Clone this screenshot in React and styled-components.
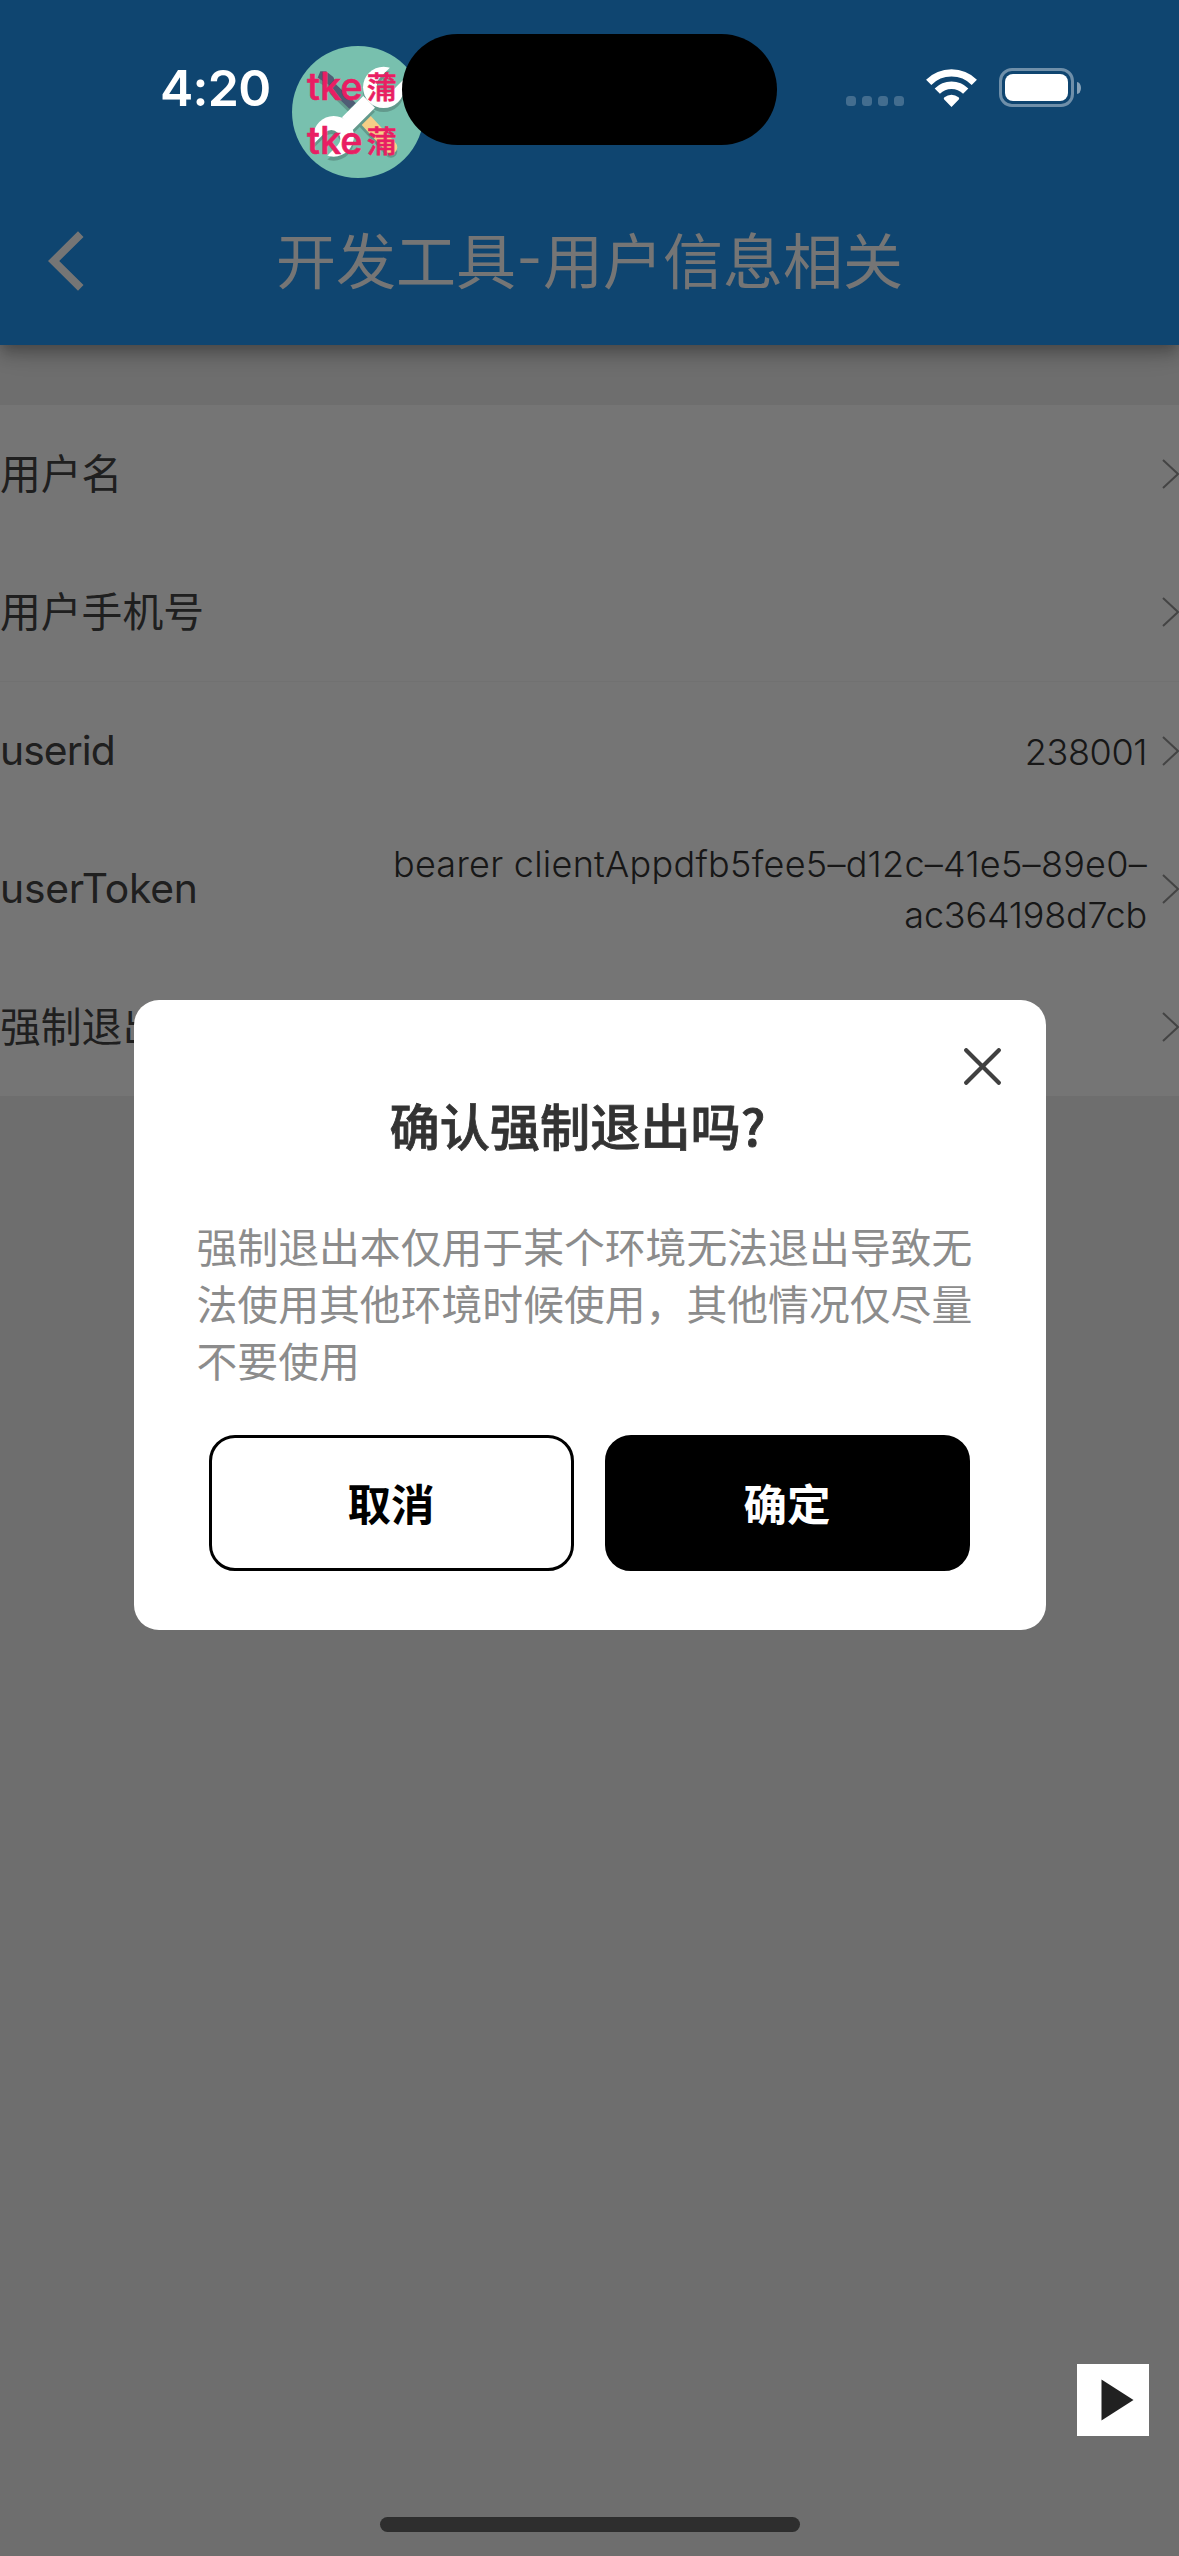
import React from "react";
import styled, { createGlobalStyle } from "styled-components";

const CJK = '"Noto Sans CJK SC", sans-serif';
const LATIN = `Inter, ${CJK}`;

const GlobalStyle = createGlobalStyle`
  * { box-sizing: border-box; }
  body { margin: 0; background: #efefef; font-family: ${CJK}; }
`;

const Screen = styled.div`
  display: grid;
  grid-template: 2556px / 1179px;
  overflow: hidden;
  background: #efefef;
  > * { grid-area: 1 / 1; }
`;

const Page = styled.div`
  display: flex;
  flex-direction: column;
`;

const AppBar = styled.header`
  flex: none;
  display: grid;
  grid-template-columns: 132px 1fr 132px;
  align-items: center;
  height: 345px;
  padding-top: 177px;
  background: #2196f3;
  box-shadow: 0 6px 12px -3px rgba(0, 0, 0, 0.2), 0 12px 15px rgba(0, 0, 0, 0.14),
    0 3px 30px rgba(0, 0, 0, 0.12);
`;

const BackButton = styled.button`
  display: flex;
  padding: 0 0 0 48px;
  border: 0;
  background: none;
`;

const Title = styled.h1`
  display: flex;
  justify-content: center;
  margin: 0;
  padding-bottom: 6px;
  font: 400 60px/84px ${CJK};
  color: #fff;
`;

const TitleDash = styled.span`
  width: 27px;
  text-align: center;
  font-family: Inter, sans-serif;
  font-size: 56px;
`;

const List = styled.main`
  display: flex;
  flex-direction: column;
  margin-top: 60px;
  background: #fff;
`;

const Row = styled.div`
  display: flex;
  align-items: center;
  height: ${(p) => (p.$divided ? 139 : 138)}px;
  ${(p) => p.$divided && "border-top: 1px solid #f6f6f6;"}
`;

const Label = styled.span`
  flex: none;
  padding-bottom: ${(p) => (p.$tracking ? 2 : 0)}px;
  font: 400 40.8px/56px ${LATIN};
  letter-spacing: ${(p) => p.$tracking || 0}px;
  color: #444;
`;

const Value = styled.span`
  flex: 1;
  padding: 2px 15px 0 160px;
  text-align: right;
  font: 300 36px/51px ${LATIN};
  color: #333;
`;

const Line = styled.span`
  display: block;
  white-space: nowrap;
  letter-spacing: ${(p) => p.$tracking || 0}px;
`;

const Backdrop = styled.div`
  z-index: 1;
  display: flex;
  align-items: flex-start;
  justify-content: center;
  padding-top: 1000px;
  background: rgba(0, 0, 0, 0.54);
`;

const Dialog = styled.section`
  display: flex;
  flex-direction: column;
  width: 912px;
  height: 630px;
  border-radius: 25px;
  background: #fff;
`;

const CloseButton = styled.button`
  align-self: flex-end;
  display: flex;
  margin: 48px 45px 0 0;
  padding: 0;
  border: 0;
  background: none;
`;

const DialogTitle = styled.h2`
  margin: 4px 24px 0 0;
  text-align: center;
  font: 500 50.2px/70px ${CJK};
  -webkit-text-stroke: 0.8px #333;
  color: #333;
`;

const Message = styled.p`
  margin: 58px 72px 0 63px;
  font: 400 40.85px/57px ${CJK};
  color: #8c8c8c;
`;

const Actions = styled.div`
  display: flex;
  gap: 31px;
  margin: 47px 76px 0 75px;
`;

const ActionButton = styled.button`
  flex: 1;
  height: 136px;
  padding: 0;
  border: 3px solid #000;
  border-radius: 26px;
  background: ${(p) => (p.$primary ? "#000" : "#fff")};
  color: ${(p) => (p.$primary ? "#fff" : "#000")};
  font: 700 43.5px/60px ${CJK};
`;

const SystemLayer = styled.div`
  z-index: 2;
  position: relative;
  display: flex;
  flex-direction: column;
  pointer-events: none;
`;

const StatusBar = styled.div`
  display: grid;
  grid-template-columns: 402px 375px 1fr;
  align-items: center;
  height: 177px;
`;

const Clock = styled.time`
  padding: 0 0 2px 160px;
  font: 600 50px/60px ${LATIN};
  letter-spacing: -0.7px;
  color: #fff;
`;

const Island = styled.div`
  z-index: 1;
  height: 111px;
  margin-top: 1px;
  border-radius: 56px;
  background: #000;
`;

const Indicators = styled.div`
  display: flex;
  align-items: flex-end;
  padding: 0 0 2px 69px;
`;

const Signal = styled.div`
  display: flex;
  gap: 6px;
  padding-bottom: 1px;
  margin-right: 22px;
`;

const SignalDot = styled.i`
  width: 10px;
  height: 10px;
  border-radius: 3.5px;
  background: rgba(255, 255, 255, 0.22);
`;

const Battery = styled.div`
  width: 75px;
  height: 39px;
  margin-left: 22px;
  padding: 3px;
  border: 3px solid rgba(255, 255, 255, 0.4);
  border-radius: 13px;
`;

const BatteryFill = styled.div`
  height: 100%;
  border-radius: 8px;
  background: #fff;
`;

const BatteryCap = styled.div`
  align-self: center;
  width: 4px;
  height: 12px;
  margin-left: 3px;
  border-radius: 0 4px 4px 0 / 0 6px 6px 0;
  background: rgba(255, 255, 255, 0.5);
`;

const DebugBadge = styled.div`
  position: absolute;
  left: 292px;
  top: 46px;
  display: grid;
  width: 132px;
  height: 132px;
  border-radius: 50%;
  overflow: hidden;
  > * { grid-area: 1 / 1; }
`;

const BadgeText = styled.div`
  z-index: 1;
  padding: 13px 0 0 15px;
  font: 500 38px/54px ${LATIN};
  -webkit-text-stroke: 0.6px #e91e63;
  color: #e91e63;
`;

const BadgeLine = styled.div`
  display: flex;
  align-items: center;
  height: 54px;
  gap: 4px;
`;

const BadgeGlyph = styled.span`
  font: 500 30px/54px ${CJK};
  padding-bottom: 2px;
`;

const FloatingPlay = styled.button`
  display: flex;
  align-self: flex-end;
  width: 72px;
  height: 72px;
  margin: auto 30px 0 0;
  padding: 15px 0 0 24px;
  border: 0;
  background: #fff;
`;

const HomeIndicator = styled.div`
  align-self: center;
  width: 420px;
  height: 15px;
  margin: 81px 0 24px;
  border-radius: 8px;
  background: #2e2e2e;
`;

const BackIcon = () => (
  <svg width="36" height="60" viewBox="0 0 36 60">
    <path d="M30 0.3 35.5 6 11.2 30 35.5 54 30 59.7 0 30Z" fill="#fff" />
  </svg>
);

const RowArrow = () => (
  <svg width="17" height="30" viewBox="0 0 17 30">
    <path d="M1 1 16 15 1 29" fill="none" stroke="#949494" strokeWidth="2" />
  </svg>
);

const CloseIcon = () => (
  <svg width="37" height="37" viewBox="0 0 37 37">
    <path d="M2.2 2.2 34.8 34.8M34.8 2.2 2.2 34.8" stroke="#404040" strokeWidth="4.2" strokeLinecap="round" />
  </svg>
);

const WifiIcon = () => (
  <svg width="51" height="38" viewBox="0 0 51 38">
    <g fill="none" stroke="#fff" strokeWidth="7.4">
      <path d="M2.7 13.3a32.2 32.2 0 0 1 45.6 0" />
      <path d="M11.3 22.2a20 20 0 0 1 28.4 0" />
    </g>
    <path d="M25.5 38 18.2 30.4c-.6-.8-.5-1.6.3-2.2a11 11 0 0 1 14 0c.8.6.9 1.4.3 2.2Z" fill="#fff" />
  </svg>
);

const PlayIcon = () => (
  <svg width="33" height="42" viewBox="0 0 33 42">
    <path d="M0.5 0.5 32.5 21 0.5 41.5Z" fill="#212121" />
  </svg>
);

const ToolsIcon = () => (
  <svg width="132" height="132" viewBox="36 48 396 396">
    <defs>
      <mask id="jaws" maskUnits="userSpaceOnUse" x="36" y="48" width="396" height="396">
        <path d="M36 48h396v396H36z" fill="#fff" />
        <path d="M318 163 392 89M154 327 80 401" stroke="#000" strokeWidth="54" strokeLinecap="round" />
      </mask>
      <g id="wrench" mask="url(#jaws)">
        <circle cx="311" cy="172" r="62" />
        <circle cx="161" cy="319" r="61" />
        <path d="M186 262 250 198 285 233 218 300Z" />
      </g>
    </defs>
    <path d="M36 48h396v396H36z" fill="#78c0ae" />
    <g transform="translate(0 12)" fill="#62998c">
      <path d="M113 143 121 124 138 124 160 141 169 164 228 220 208 236 150 180 146 164Z" />
      <path d="M250 262 333 352" stroke="#62998c" strokeWidth="38" strokeLinecap="round" />
    </g>
    <path d="M113 143 121 124 138 124 160 141 169 164 228 220 208 236 150 180 146 164Z" fill="#4f5d75" />
    <path d="M250 262 333 352" stroke="#f5cf87" strokeWidth="38" strokeLinecap="round" />
    <g transform="translate(0 12)" fill="#62998c"><use href="#wrench" /></g>
    <use href="#wrench" fill="#fff" />
  </svg>
);

export default function App() {
  return (
    <>
      <GlobalStyle />
      <Screen>
        <Page>
          <AppBar>
            <BackButton aria-label="返回"><BackIcon /></BackButton>
            <Title>开发工具<TitleDash>-</TitleDash>用户信息相关</Title>
          </AppBar>
          <List>
            <Row><Label>用户名</Label><Value /><RowArrow /></Row>
            <Row><Label>用户手机号</Label><Value /><RowArrow /></Row>
            <Row $divided>
              <Label $tracking={-0.9}>userid</Label>
              <Value><Line $tracking={-0.4}>238001</Line></Value>
              <RowArrow />
            </Row>
            <Row>
              <Label $tracking={-0.2}>userToken</Label>
              <Value>
                <Line $tracking={0.27}>bearer clientAppdfb5fee5–d12c–41e5–89e0–</Line>
                <Line $tracking={-0.2}>ac364198d7cb</Line>
              </Value>
              <RowArrow />
            </Row>
            <Row><Label>强制退出</Label><Value /><RowArrow /></Row>
          </List>
        </Page>
        <Backdrop>
          <Dialog role="dialog">
            <CloseButton aria-label="关闭"><CloseIcon /></CloseButton>
            <DialogTitle>确认强制退出吗?</DialogTitle>
            <Message>强制退出本仅用于某个环境无法退出导致无法使用其他环境时候使用，其他情况仅尽量不要使用</Message>
            <Actions>
              <ActionButton>取消</ActionButton>
              <ActionButton $primary>确定</ActionButton>
            </Actions>
          </Dialog>
        </Backdrop>
        <SystemLayer>
          <DebugBadge>
            <ToolsIcon />
            <BadgeText>
              <BadgeLine>tke<BadgeGlyph>蒲</BadgeGlyph></BadgeLine>
              <BadgeLine>tke<BadgeGlyph>蒲</BadgeGlyph></BadgeLine>
            </BadgeText>
          </DebugBadge>
          <StatusBar>
            <Clock>4:20</Clock>
            <Island />
            <Indicators>
              <Signal><SignalDot /><SignalDot /><SignalDot /><SignalDot /></Signal>
              <WifiIcon />
              <Battery><BatteryFill /></Battery>
              <BatteryCap />
            </Indicators>
          </StatusBar>
          <FloatingPlay aria-label="播放"><PlayIcon /></FloatingPlay>
          <HomeIndicator />
        </SystemLayer>
      </Screen>
    </>
  );
}
